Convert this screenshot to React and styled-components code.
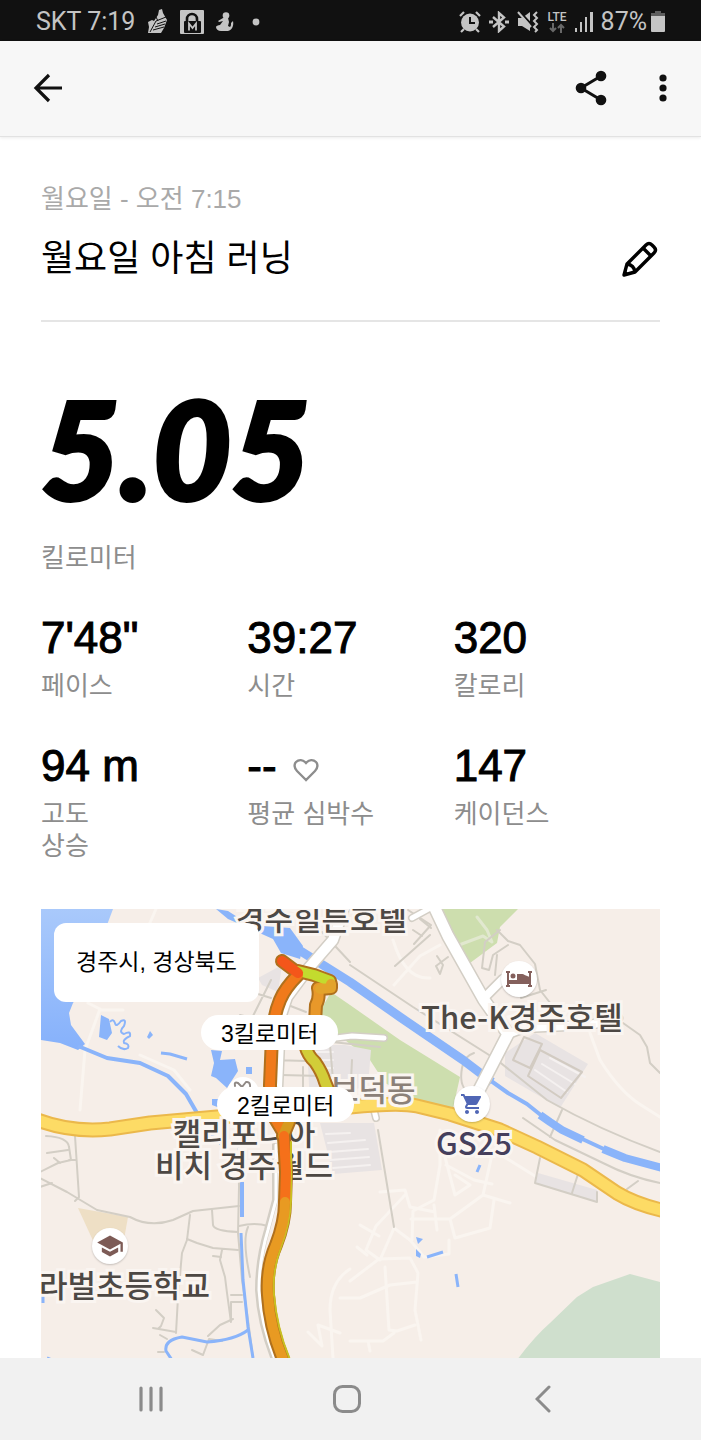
import React from "react";
import styled, { createGlobalStyle } from "styled-components";
import { MdSchool, MdShoppingCart } from "react-icons/md";

const GlobalStyle = createGlobalStyle`
    * {
        box-sizing: border-box;
    }
    body {
        margin: 0;
        background: #fff;
        color: #000;
        font-family: "Liberation Sans", "Noto Sans CJK KR", sans-serif;
    }
    h1, p {
        margin: 0;
        font-weight: normal;
    }
    svg {
        display: block;
        flex-shrink: 0;
    }
`

const Screen = styled.div`
    display: flex;
    flex-direction: column;
    min-height: 100vh;
`

const StatusBar = styled.div`
    display: flex;
    justify-content: space-between;
    align-items: center;
    height: 41px;
    padding: 2px 36px 0;
    background: #111;
    color: #c4c4c4;
    font-family: Roboto, sans-serif;
    font-size: 25px;
    line-height: 32px;
`

const StatusGroup = styled.div`
    display: flex;
    align-items: center;
    gap: ${props => props.$gap};
`

const Network = styled.div`
    display: flex;
    flex-direction: column;
    align-items: center;
    font-family: Roboto, sans-serif;
    font-size: 12px;
    font-weight: 500;
    line-height: 12px;
`

const Battery = styled.div`
    display: flex;
    align-items: center;
    gap: 4px;
`

const Header = styled.header`
    display: flex;
    align-items: center;
    height: 96px;
    padding: 0 18px 1px 28px;
    background: #f7f7f7;
    border-bottom: 1px solid #e2e2e2;
    box-shadow: 0 1px 3px rgba(0, 0, 0, 0.08);
`

const Actions = styled.div`
    display: flex;
    gap: 32px;
    margin-left: auto;
`

const IconButton = styled.button`
    display: flex;
    align-items: center;
    justify-content: center;
    width: 40px;
    height: 40px;
    padding: 0;
    border: none;
    background: none;
    color: ${props => props.$color || '#111'};
    cursor: pointer;
`

const Content = styled.main`
    display: flex;
    flex-direction: column;
    flex: 1;
    padding: 46px 41px 0;
`

const RunDate = styled.p`
    color: #a9a9a9;
    font-size: 26px;
    line-height: 32px;
`

const TitleRow = styled.div`
    display: flex;
    justify-content: space-between;
    align-items: center;
    margin-top: 20px;
    padding-bottom: 37px;
    border-bottom: 2px solid #e5e5e5;
`

const Title = styled.h1`
    font-size: 36px;
    line-height: 48px;
`

const Distance = styled.p`
    margin-top: 56px;
    font-family: Lato, sans-serif;
    font-size: 136px;
    font-style: italic;
    font-weight: 900;
    line-height: 140px;
    -webkit-text-stroke: 4px #000;
`

const Label = styled.p`
    color: #8d8d8d;
    font-size: 26px;
    line-height: 32px;
`

const DistanceLabel = styled(Label)`
    margin-top: 24px;
`

const Stats = styled.div`
    display: grid;
    grid-template-columns: repeat(3, 1fr);
    row-gap: 40px;
    margin: 40px 0 47px;
`

const Value = styled.p`
    display: flex;
    align-items: center;
    gap: 16px;
    margin-bottom: 8px;
    font-size: 44px;
    line-height: 48px;
    -webkit-text-stroke: 1px #000;
`

const Map = styled.section`
    position: relative;
    flex: 1;
    min-height: 400px;
    overflow: hidden;
    background: #f6eee8;
    font-family: "Noto Sans CJK KR", sans-serif;
`

const MapDrawing = styled.svg`
    position: absolute;
    top: 0;
    left: 0;
    width: 100%;
    height: 100%;
`

const Place = styled.span`
    position: absolute;
    left: ${props => props.$x}px;
    top: ${props => props.$y}px;
    color: ${props => props.$color || '#4d4844'};
    font-size: 31px;
    font-weight: 500;
    line-height: 32px;
    text-align: center;
    white-space: nowrap;
    paint-order: stroke fill;
    -webkit-text-stroke: 6px #faf5f1;
`

const Poi = styled.span`
    position: absolute;
    left: ${props => props.$x}px;
    top: ${props => props.$y}px;
    display: flex;
    align-items: center;
    justify-content: center;
    width: 36px;
    height: 36px;
    border-radius: 50%;
    background: #fff;
    box-shadow: 0 1px 2px rgba(0, 0, 0, 0.2);
    color: ${props => props.$color};
`

const Region = styled.div`
    position: absolute;
    left: 13px;
    top: 14px;
    padding: 23px 22px 24px;
    border-radius: 12px;
    background: #fff;
    font-family: "Liberation Sans", "Noto Sans CJK KR", sans-serif;
    font-size: 23px;
    line-height: 32px;
`

const KmMarker = styled(Region)`
    left: ${props => props.$x}px;
    top: ${props => props.$y}px;
    padding: 3px 20px 0;
    border-radius: 18px;
`

const NavBar = styled.nav`
    position: sticky;
    bottom: 0;
    display: grid;
    grid-template-columns: repeat(3, 1fr);
    justify-items: center;
    align-items: center;
    height: 82px;
    padding: 0 60px 0 53px;
    background: #f1f1f1;
`

const ShoeIcon = () => (
    <svg width="21" height="25" viewBox="0 0 21 25">
        <path d="M12 1l3-1 1 4 4 7-3 8-3 5H1l1-6-1-5 4-2 2 1 4-6z" fill="#c4c4c4" />
        <path d="M19 8L9 12 3 23M19 12l-9 3M18 15l-10 3M17 18l-11 3M9 8l2 4" stroke="#111" fill="none" />
    </svg>
)

const LockIcon = () => (
    <svg width="24" height="24" viewBox="0 0 24 24">
        <rect width="24" height="24" rx="1" fill="#c4c4c4" />
        <path d="M7 12V9a5 5 0 0 1 10 0v3" fill="none" stroke="#111" strokeWidth="2.6" />
        <rect x="4" y="11" width="17" height="12" rx="1" fill="#111" />
        <path d="M9 20.5v-7l3.5 4.500 3.500-4.500v7" fill="none" stroke="#c4c4c4" strokeWidth="1.8" />
    </svg>
)

const YogaIcon = () => (
    <svg width="18" height="20" viewBox="0 0 18 20" fill="#c4c4c4">
        <circle cx="10" cy="3.5" r="3.3" />
        <path d="M7 6h5l1 4-1 4 2 1c1-1 1-2 1-4l2-2c1 5-1 9-5 10H5c-3 0-5-2-5-4 0-1 2-2 4-2l3-4-4 1-1-1z" />
    </svg>
)

const AlarmIcon = () => (
    <svg width="22" height="22" viewBox="0 0 22 22">
        <circle cx="11" cy="11.5" r="9" fill="#c4c4c4" />
        <path d="M1 5l4-4M21 5l-4-4M5 18l-3 3M17 18l3 3" stroke="#c4c4c4" strokeWidth="2.2" />
        <path d="M11 6v6h5" stroke="#111" strokeWidth="2" fill="none" />
    </svg>
)

const BluetoothIcon = () => (
    <svg width="20" height="22" viewBox="0 0 20 22">
        <path d="M4 6l11 9.500L10 20V2l5 4.500L4 16" fill="none" stroke="#c4c4c4" strokeWidth="2.4" />
        <path d="M0 11h4M16 11h4" stroke="#c4c4c4" strokeWidth="3" />
    </svg>
)

const MuteIcon = () => (
    <svg width="22" height="22" viewBox="0 0 22 22">
        <path d="M1 7h4l8-6v19l-8-5H1z" fill="#c4c4c4" />
        <path d="M3 1l12 13" stroke="#111" strokeWidth="2" />
        <path d="M1 1l13 15" stroke="#c4c4c4" strokeWidth="2" />
        <path d="M20 1l-3 3 3 3-3 3 3 3-3 3 3 3-2 2" fill="none" stroke="#c4c4c4" strokeWidth="2" />
    </svg>
)

const BedIcon = () => (
    <svg width="26" height="16" viewBox="0 0 26 16" fill="#84605c">
        <path d="M0 1h4M2 0v15M0 15h4M22 1h4M24 0v15M22 15h4" stroke="#84605c" strokeWidth="2" />
        <path d="M2 9h22v4H2zM11 10V3h4c4 0 4 2 9 3v4z" />
        <circle cx="7" cy="5" r="2.5" />
    </svg>
)

// Sits a little below the middle of the line, on the baseline of the number
const HeartIcon = () => (
    <svg width="26" height="32" viewBox="0 0 26 32">
        <path
            d="M13 30L4 21C1 18 1 14 3 12c3-3 7-2 9 0l1 1 1-1c2-2 6-3 9 0 2 2 2 6-1 9z"
            fill="none" stroke="#8d8d8d" strokeWidth="2.4"
        />
    </svg>
)

const PencilIcon = () => (
    <svg width="36" height="36" viewBox="0 0 36 36" fill="none" stroke="#000" strokeWidth="3.4" strokeLinejoin="round">
        <path d="M2 34l3-11L24 4q3-3 6 0l2 2q3 3 0 6L13 31z" />
        <path d="M21 7l8 8M5 23q7 1 8 8" />
        <path d="M2 34l1-5 4 4z" fill="#000" stroke="none" />
    </svg>
)

// Coloured by pace, from red to yellow
const routeParts = [
    { d: "M305 1045Q308 1056 315 1062Q322 1072 325 1082L330 1094", color: "#d2cd38" },
    { d: "M330 987L318 988Q320 998 316 1005L315 1022", color: "#e8982a" },
    { d: "M298 971L314 975L330 981", color: "#c3db2e" },
    { d: "M331 984L331 988L320 989", color: "#e3a32b" },
    { d: "M298 975Q285 988 280 1000Q274 1014 272 1036L270 1085L271 1112L283 1132", color: "#f07a1b" },
    { d: "M282 961L298 973", color: "#f4561a" },
    { d: "M289 1122L283 1136", color: "#d79a20" },
    { d: "M284 1136L286 1172L285 1202", color: "#f5701a" },
    { d: "M285 1202Q285 1222 276 1245Q266 1268 268 1295Q270 1330 285 1364", color: "#e89a22" },
]

const grayRoads = [
    "M40 1178L67 1192L97 1210L130 1217Q150 1228 173 1220L193 1211L239 1206",
    "M75 1136L79 1197L75 1201M46 1136Q68 1137 69 1147L71 1160L58 1163L40 1172M47 1153L68 1150M54 1158L60 1163M40 1187L52 1183M75 1160L69 1160",
    "M190 1215L187 1240L182 1253L178 1297L176 1333",
    "M212 1210L213 1225Q214 1231 238 1232",
    "M187 1239L197 1243L213 1248L238 1250M222 1250L220 1260L225 1277L227 1293L231 1322",
    "M231 1295H242M231 1302H242M231 1302V1318M233 1319L220 1325L208 1336M213 1256L221 1257",
    "M238 1128L239 1187L238 1233L242 1280L248 1320L253 1358",
    "M239 1226Q255 1222 268 1226M248 1227Q242 1240 250 1277",
    "M153 1328L176 1332M156 1310L164 1318L161 1326L158 1329M192 1350L203 1355L209 1339L222 1341M160 1335L167 1339M158 1352L164 1352",
    "M350 965L413 1007L497 1060L547 1100Q600 1130 660 1152",
    "M322 932L350 962M523 1118L555 1140L603 1163Q630 1177 660 1183",
    "M623 1023L640 1035L647 1047L650 1063L660 1073",
    "M474 1053Q464 1056 462 1068Q459 1085 467 1091M378 1130L394 1227",
    "M550 1137L562 1110M540 1158L535 1183L597 1202V1192M578 1174L572 1193M627 1189L638 1181",
    "M271 980L252 1018L240 1015M258 994L271 998M277 1014L302 1028M288 1005L306 1012M272 1045L300 1044M322 1041L380 1047M281 1075L322 1076",
    "M281 1045V1110M303 1067V1120M272 1060L306 1061M330 1045L336 1115M352 1060L350 1103",
    "M408 910L431 925L414 944M413 930L422 936M420 919L431 928M395 966L430 935M437 956L443 965L440 974L436 966L448 957M500 930L485 942L482 968L489 970L493 955L508 945M497 930L508 941L520 945L535 964L540 990L551 1004M497 955L495 975M521 998L546 990",
]

const lightRoads = [
    "M88 1003L100 1009L85 1050L80 1110M100 1010L123 1010M140 1055L174 1070L190 1090M156 909L149 925",
    "M440 1130V1165L434 1200L413 1211L412 1240M380 1192L405 1190L410 1207L435 1212M434 1205L437 1230",
    "M411 1219L450 1219L483 1195L510 1203M450 1219L455 1238L490 1228L494 1200M483 1195L493 1150L535 1176",
    "M405 1195L376 1226L366 1250L380 1260L394 1228L410 1240M360 1225L379 1236M357 1247L367 1255",
    "M350 1281L379 1259L410 1258L418 1273L415 1310L421 1340M340 1298H360L390 1285L417 1282",
    "M385 1267L389 1330L397 1331L415 1325M350 1341L383 1341L394 1333M368 1341L370 1351M410 1240L424 1257L449 1254V1240",
    "M445 1157L455 1195L470 1185L455 1175M446 1165L474 1180L492 1184M590 1033L600 1060Q620 1092 641 1105L660 1117",
    "M350 1269Q330 1282 330 1310L333 1358M308 1332L322 1346L318 1325L340 1333M393 940Q405 980 430 978M394 985L420 956L440 945",
]

const whiteRoads = [
    { d: "M345 905L333 940L307 970L287 997L280 1018L276 1110", width: 10 },
    { d: "M431 900L448 936L484 1000L508 1034L475 1098", width: 11 },
    { d: "M484 998L503 979M508 1034L524 1028L590 1025L618 1018", width: 8 },
    { d: "M412 918L434 906M320 1040L352 1036L384 1038M374 1110L376 1118", width: 5 },
]

const waterLines = [
    { d: "M299 950L350 982L400 1017L463 1060L492 1082", width: 9 },
    { d: "M487 1078L508 1093L527 1104L547 1120", width: 4 },
    { d: "M540 1115L550 1122L562 1130L583 1140", width: 8 },
    { d: "M578 1137L606 1150", width: 4 },
    { d: "M603 1149L625 1158L662 1168", width: 8 },
    { d: "M78 1046L107 1058L140 1063L168 1076L186 1094L197 1113", width: 4 },
    { d: "M242 1182V1217", width: 4 },
    { d: "M241 1233L243 1280L248 1327L253 1358", width: 3 },
    { d: "M248 1330Q235 1340 207 1342L182 1337Q164 1340 166 1351L172 1360", width: 3 },
    { d: "M210 1133L224 1147M43 1296V1303M47 1358L52 1360", width: 3 },
    { d: "M110 1022Q113 1018 115 1023Q116 1028 121 1021Q127 1018 124 1026Q118 1032 124 1034Q131 1030 130 1036Q122 1040 124 1043Q130 1044 128 1048Q123 1051 118 1046", width: 2 },
    { d: "M161 1053L170 1054L187 1059M477 1172L480 1165M456 1274L458 1287M427 1257L443 1252", width: 3 },
]

const MapArtwork = () => (
    <MapDrawing viewBox="41 909 619 449" preserveAspectRatio="xMinYMin slice" fill="none" strokeLinecap="round" strokeLinejoin="round" aria-hidden="true">
        <defs>
            <linearGradient id="lake" x1="0" y1="0" x2="0" y2="1">
                <stop offset="0" stopColor="#a9c9fb" />
                <stop offset="1" stopColor="#86b1fb" />
            </linearGradient>
        </defs>
        <path d="M41 909H113L107 925L92 975L73 1003L69 1013L71 1025L85 1044L78 1050L60 1043L41 1040z" fill="url(#lake)" />
        <path d="M438 909H518L500 927L497 943L470 963z" fill="#cddeae" />
        <path d="M331 992L350 1005L400 1040L460 1077L453 1108L415 1099L385 1083L370 1060L345 1040L322 1036L318 1015z" fill="#cddeae" />
        <path d="M517 1360Q534 1337 550 1323L577 1297L593 1287L630 1274L660 1282V1360z" fill="#cfdfcd" />
        <path d="M78 1208L128 1217L123 1245L95 1245z" fill="#eedfc5" />
        <path d="M320 1123H374L382 1170L333 1174zM505 1053L535 1033L588 1064L560 1108L505 1076zM538 1173L597 1190V1202L535 1183zM307 1045H345L371 1050L368 1085L310 1105zM258 978L282 965L278 992L262 985z" fill="#e8e3e3" />
        <path d="M326 1134L350 1133M328 1143L365 1140M329 1152L368 1149M330 1160L369 1157M333 1168L370 1165M312 1052H333M312 1060H333M312 1068H333M312 1088H333M312 1096H333M550 1058L585 1077M542 1064L575 1084M535 1070L567 1092" stroke="#f5f1f0" strokeWidth="2" />
        <path d="M524 1037L513 1060L530 1068L542 1044zM540 1050L582 1072L561 1098L528 1076z" stroke="#d2cbc2" strokeWidth="2" />
        <g stroke="#faf5f0" strokeWidth="3">
            {lightRoads.map(d => <path key={d} d={d} />)}
        </g>
        <path d="M459 945L483 936L492 942L487 930L477 917" stroke="#e1e8cf" strokeWidth="3" />
        <g stroke="#d3cec5" strokeWidth="2">
            {grayRoads.map(d => <path key={d} d={d} />)}
        </g>
        <path d="M216 909L228 911L242 920L262 926L290 928L303 946L300 959L281 953L273 939L244 926L228 919z" fill="#8ab4fa" />
        <path d="M101 1015L109 1019L112 1033L107 1040L99 1037zM147 1037L150 1031L153 1035L149 1039zM211 1050L222 1051L220 1060L235 1059L238 1071L227 1088L216 1078L211 1076L214 1063zM246 1067H252V1074H246zM212 1099H220V1108L212 1105zM416 1237L423 1239L418 1244zM416 1249L421 1254L420 1258L416 1256z" fill="#8ab4fa" />
        <g stroke="#8ab4fa" strokeLinecap="butt">
            {waterLines.map(({ d, width }) => <path key={d} d={d} strokeWidth={width} />)}
        </g>
        <g stroke="#d3cec5">
            {whiteRoads.map(({ d, width }) => <path key={d} d={d} strokeWidth={width + 3} />)}
        </g>
        <g stroke="#fff">
            {whiteRoads.map(({ d, width }) => <path key={d} d={d} strokeWidth={width} />)}
        </g>
        {[["#ebb84b", 15], ["#fddb65", 11]].map(([color, width]) => (
            <path
                key={color} stroke={color} strokeWidth={width}
                d="M35 1119Q70 1133 110 1129L150 1123L217 1117L300 1112L350 1107Q400 1102 417 1106L450 1114L500 1130L537 1147L583 1170L617 1193Q635 1204 665 1211"
            />
        ))}
        <path d="M275 1145V1200L267 1230Q258 1260 258 1290Q260 1325 275 1362" stroke="#d3cec5" strokeWidth="6" />
        <path d="M276 1145V1200L268 1230Q259 1260 259 1290Q261 1325 276 1362" stroke="#fff" strokeWidth="3" />
        <circle cx="243" cy="1093" r="16" fill="#fff" />
        <path d="M235 1086Q234 1081 238 1083L242 1087L246 1082Q251 1081 250 1089" stroke="#8f8884" strokeWidth="2" />
    </MapDrawing>
)

const Route = () => (
    <MapDrawing viewBox="41 909 619 449" preserveAspectRatio="xMinYMin slice" fill="none" strokeLinecap="round" strokeLinejoin="round" aria-hidden="true">
        <g stroke="#b0701d" strokeWidth="14">
            {routeParts.map(({ d }) => <path key={d} d={d} />)}
        </g>
        <path d="M291 1142V1200Q290 1224 281 1247Q272 1270 274 1295Q277 1330 291 1362" stroke="#c9c021" strokeWidth="2" />
        {routeParts.map(({ d, color }) => <path key={d} d={d} stroke={color} strokeWidth="10" />)}
    </MapDrawing>
)

const stats = [
    { value: `7'48"`, label: "페이스" },
    { value: "39:27", label: "시간" },
    { value: "320", label: "칼로리" },
    { value: "94 m", label: <>고도<br />상승</> },
    { value: "--", label: "평균 심박수", heart: true },
    { value: "147", label: "케이던스" },
]

const App = () => {
    return (
        <Screen>
            <GlobalStyle />
            <StatusBar>
                <StatusGroup $gap="12px">
                    <span>SKT 7:19</span>
                    <ShoeIcon />
                    <LockIcon />
                    <YogaIcon />
                    <svg width="20" height="8" viewBox="0 0 20 8"><circle cx="10" cy="4" r="3.4" fill="#c4c4c4" /></svg>
                </StatusGroup>
                <StatusGroup $gap="8px">
                    <AlarmIcon />
                    <BluetoothIcon />
                    <MuteIcon />
                    <Network>
                        LTE
                        <svg width="16" height="10" viewBox="0 0 16 10" fill="none" stroke="#686868" strokeWidth="2">
                            <path d="M4 0v8M1 5l3 3 3-3M12 10V2M9 5l3-3 3 3" />
                        </svg>
                    </Network>
                    <svg width="18" height="20" viewBox="0 0 18 20" fill="#c4c4c4">
                        <path d="M0 16h2v4H0zM5 10h2v10H5zM10 5h2v15h-2zM15 0h3v20h-3z" />
                    </svg>
                    <Battery>
                        <span>87%</span>
                        <svg width="14" height="22" viewBox="0 0 14 22">
                            <path d="M4 0h6v2h4v4H0V2h4z" fill="#5d5d5d" />
                            <path d="M0 5h14v15q0 1-1 1H1q-1 0-1-1z" fill="#c4c4c4" />
                        </svg>
                    </Battery>
                </StatusGroup>
            </StatusBar>

            <Header>
                <IconButton aria-label="뒤로">
                    <svg width="30" height="30" viewBox="0 0 30 30" fill="none" stroke="currentColor" strokeWidth="3.2">
                        <path d="M29 15H4M16 2L3 15l13 13" />
                    </svg>
                </IconButton>
                <Actions>
                    <IconButton aria-label="공유">
                        <svg width="32" height="36" viewBox="0 0 32 36" fill="currentColor">
                            <path d="M26 6L6 18l20 12" fill="none" stroke="currentColor" strokeWidth="3" />
                            <circle cx="26" cy="6" r="5.3" />
                            <circle cx="6" cy="18" r="5.3" />
                            <circle cx="26" cy="30" r="5.3" />
                        </svg>
                    </IconButton>
                    <IconButton aria-label="더보기">
                        <svg width="8" height="30" viewBox="0 0 8 30" fill="currentColor">
                            <circle cx="4" cy="5" r="3.6" />
                            <circle cx="4" cy="15" r="3.6" />
                            <circle cx="4" cy="25" r="3.6" />
                        </svg>
                    </IconButton>
                </Actions>
            </Header>

            <Content>
                <RunDate>월요일 - 오전 7:15</RunDate>
                <TitleRow>
                    <Title>월요일 아침 러닝</Title>
                    <IconButton aria-label="제목 수정">
                        <PencilIcon />
                    </IconButton>
                </TitleRow>

                <Distance>5.05</Distance>
                <DistanceLabel>킬로미터</DistanceLabel>

                <Stats>
                    {stats.map(({ value, label, heart }) => (
                        <div key={value}>
                            <Value>
                                {value}
                                {heart && <HeartIcon />}
                            </Value>
                            <Label>{label}</Label>
                        </div>
                    ))}
                </Stats>

                <Map>
                    <MapArtwork />
                    <Place $x={195} $y={-8}>경주힐튼호텔</Place>
                    <Place $x={380} $y={91}>The-K경주호텔</Place>
                    <Place $x={289} $y={163} $color="#8b8078">보덕동</Place>
                    <Place $x={395} $y={217} $color="#453f5c">GS25</Place>
                    <Place $x={114} $y={207}>캘리포니아<br />비치 경주월드</Place>
                    <Place $x={-2} $y={359}>라벌초등학교</Place>
                    <Poi $x={460} $y={52} $color="#84605c"><BedIcon /></Poi>
                    <Poi $x={413} $y={177} $color="#5066b5"><MdShoppingCart size={24} /></Poi>
                    <Poi $x={51} $y={319} $color="#7d5b56"><MdSchool size={28} /></Poi>
                    <Route />
                    <Region>경주시, 경상북도</Region>
                    <KmMarker $x={160} $y={106}>3킬로미터</KmMarker>
                    <KmMarker $x={176} $y={178}>2킬로미터</KmMarker>
                </Map>
            </Content>

            <NavBar>
                <IconButton $color="#8b8b8b" aria-label="최근 앱">
                    <svg width="26" height="28" viewBox="0 0 26 28" stroke="currentColor" strokeWidth="3.2" strokeLinecap="round">
                        <path d="M3 3v22M13 3v22M23 3v22" />
                    </svg>
                </IconButton>
                <IconButton $color="#8b8b8b" aria-label="홈">
                    <svg width="28" height="28" viewBox="0 0 28 28" fill="none" stroke="currentColor" strokeWidth="3">
                        <rect x="1.5" y="1.5" width="25" height="25" rx="8" />
                    </svg>
                </IconButton>
                <IconButton $color="#8b8b8b" aria-label="이전">
                    <svg width="16" height="28" viewBox="0 0 16 28" fill="none" stroke="currentColor" strokeWidth="3" strokeLinecap="round">
                        <path d="M14 2L2 14l12 12" />
                    </svg>
                </IconButton>
            </NavBar>
        </Screen>
    )
}

export default App;
